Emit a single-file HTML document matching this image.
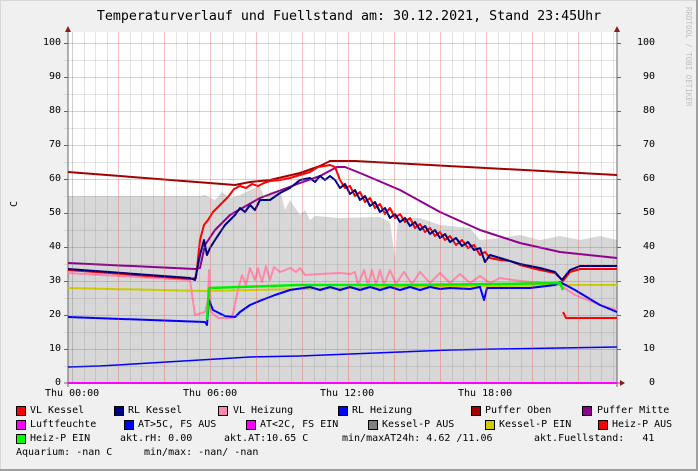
<!DOCTYPE html><html><head><style>
body{margin:0;background:#f0f0f0}
#w{position:relative;width:698px;height:471px;overflow:hidden;background:#f0f0f0;font-family:"DejaVu Sans Mono","Liberation Mono",monospace;}
.t{position:absolute;font-size:10px;color:#000;white-space:pre;line-height:12px}
.b{position:absolute;width:8px;height:8px;border:1px solid #000}
</style></head><body><div id="w">
<svg width="698" height="471" style="position:absolute;left:0;top:0">
<rect x="0" y="0" width="698" height="471" fill="#f0f0f0"/>
<rect x="0.5" y="0.5" width="696" height="469" fill="none" stroke="#d8d8d8"/>
<line x1="697" y1="0" x2="697" y2="471" stroke="#a0a0a0" stroke-width="2"/>
<line x1="0" y1="470" x2="698" y2="470" stroke="#a0a0a0" stroke-width="2"/>
<rect x="68" y="32" width="549" height="351" fill="#fff"/>
<polygon fill="#d7d7d7" points="68,383 68,196 200,196 205,195 215,200 222,192 230,198 240,195 250,190 260,186 265,200 270,192 280,190 285,210 290,200 300,215 305,210 310,220 315,216 340,218 380,217 390,222 395,258 398,218 420,218 440,225 470,228 480,240 500,238 520,235 540,240 560,236 580,240 600,236 617,240 617,383"/>
<line x1="72.5" y1="32" x2="72.5" y2="383" stroke="rgba(120,120,120,0.2)"/>
<line x1="68" y1="28" x2="68" y2="387" stroke="#666"/>
<line x1="617" y1="28" x2="617" y2="387" stroke="#666"/>
<line x1="64" y1="383" x2="622" y2="383" stroke="#666"/>
<polygon points="65,32 71,32 68,26" fill="#8b1a1a"/>
<polygon points="614,32 620,32 617,26" fill="#8b1a1a"/>
<polygon points="620,380 620,386 625,383" fill="#8b1a1a"/>
<g fill="none" stroke-width="2" stroke-linejoin="round">
<polyline stroke="#ff00ff" points="68,383 617,383"/>
<polyline stroke="#0000ff" stroke-width="1.5" points="68,367 100,366 150,363 200,360 250,357 300,356 350,354 400,352 450,350 500,349 560,348 617,347"/>
<polyline stroke="#a00000" points="68,172 235,185 250,182 270,180 300,173 320,166 330,161 355,161 617,175"/>
<polyline stroke="#900090" points="68,263 195,269 200,268 205,245 215,230 230,215 260,198 300,183 320,176 337,167 345,167 360,173 400,190 440,212 480,230 520,243 560,252 617,258"/>
<polyline style="stroke:#cccc00" points="68,288 205,291 300,289 400,287 500,286 560,285 617,285"/>
<polyline stroke="#ff88aa" points="68,273 190,280 195,315 205,312 208,300 209,270 211,312 218,318 232,318 238,290 242,275 246,285 250,268 255,280 258,268 262,282 266,266 270,280 274,267 280,272 290,268 296,272 300,268 305,275 320,274 340,273 350,274 355,272 358,285 364,270 368,285 372,270 376,285 380,270 384,285 390,270 396,284 404,272 412,284 420,272 430,283 440,273 450,283 460,274 470,283 480,276 490,283 500,278 520,281 545,283 560,285 575,295 600,305 617,310"/>
<polyline stroke="#0000ff" points="68,317 205,322 207,325 209,300 213,310 225,316 235,317 240,312 250,305 262,300 275,295 290,290 310,287 320,290 330,287 340,290 350,287 360,290 370,287 380,290 390,287 400,290 410,287 420,290 430,287 440,289 450,288 470,289 480,287 484,300 487,288 500,288 530,288 555,285 560,282 575,290 600,305 617,312"/>
<polyline stroke="#00ee00" stroke-width="2.5" points="207,320 209,288 300,285 400,285 500,284 560,283 563,290"/>
<polyline stroke="#ff0000" points="563,312 566,318 617,318"/>
<polyline stroke="#ff0000" points="68,270 190,279 196,278 200,240 204,225 208,220 213,212 220,205 228,197 234,189 240,186 246,188 252,184 258,186 264,183 270,181 280,180 290,178 300,175 310,172 318,167 325,166 330,165 335,167 340,180 345,188 350,186 355,196 360,192 365,202 370,198 375,208 380,204 385,214 390,208 395,218 400,214 405,222 410,218 415,228 420,224 425,232 430,228 435,236 440,232 445,240 450,236 456,245 462,240 468,248 474,245 480,255 485,252 490,258 500,260 510,261 520,265 540,270 555,273 563,281 570,272 580,269 617,269"/>
<polyline stroke="#000080" points="68,269 190,278 195,280 200,255 204,240 207,255 210,248 215,240 225,225 235,215 240,208 245,212 250,205 255,210 260,200 270,200 280,193 290,188 300,180 310,178 315,182 320,176 325,180 330,176 335,180 340,188 345,184 350,194 355,190 360,200 365,196 370,206 375,202 380,212 385,208 390,218 395,214 400,222 405,218 410,226 415,222 420,230 425,226 430,234 435,230 440,238 445,234 450,242 456,238 462,246 468,242 474,250 480,248 485,262 490,255 500,258 520,264 540,268 555,272 562,280 570,270 580,266 617,266"/>
</g>
</svg>
<svg width="698" height="471" style="position:absolute;left:0;top:0;pointer-events:none" id="gs"></svg>
<div class="t" style="left:0;top:9px;width:698px;text-align:center;font-size:13.3px;line-height:16px">Temperaturverlauf und Fuellstand am: 30.12.2021, Stand 23:45Uhr</div>
<div class="t" style="left:684px;top:7px;font-size:7.5px;color:#c0c0c0;writing-mode:vertical-rl;line-height:8px">RRDTOOL / TOBI OETIKER</div>
<div class="t" style="left:9px;top:201px;writing-mode:vertical-rl;transform:rotate(180deg)">C</div>
<div id="yl"></div>
<div class="t" style="left:45px;top:388px">Thu 00:00</div>
<div class="t" style="left:183px;top:388px">Thu 06:00</div>
<div class="t" style="left:320px;top:388px">Thu 12:00</div>
<div class="t" style="left:458px;top:388px">Thu 18:00</div>
<div class="b" style="left:16px;top:406px;background:#ff0000"></div><div class="t" style="left:30px;top:405px">VL Kessel</div>
<div class="b" style="left:114px;top:406px;background:#000080"></div><div class="t" style="left:128px;top:405px">RL Kessel</div>
<div class="b" style="left:218px;top:406px;background:#ff88aa"></div><div class="t" style="left:233px;top:405px">VL Heizung</div>
<div class="b" style="left:338px;top:406px;background:#0000ff"></div><div class="t" style="left:352px;top:405px">RL Heizung</div>
<div class="b" style="left:471px;top:406px;background:#a00000"></div><div class="t" style="left:485px;top:405px">Puffer Oben</div>
<div class="b" style="left:582px;top:406px;background:#900090"></div><div class="t" style="left:597px;top:405px">Puffer Mitte</div>
<div class="b" style="left:16px;top:420px;background:#ff00ff"></div><div class="t" style="left:30px;top:419px">Luftfeuchte</div>
<div class="b" style="left:124px;top:420px;background:#0000ff"></div><div class="t" style="left:138px;top:419px">AT&gt;5C, FS AUS</div>
<div class="b" style="left:246px;top:420px;background:#ff00ff"></div><div class="t" style="left:260px;top:419px">AT&lt;2C, FS EIN</div>
<div class="b" style="left:368px;top:420px;background:#808080"></div><div class="t" style="left:382px;top:419px">Kessel-P AUS</div>
<div class="b" style="left:485px;top:420px;background:#cccc00"></div><div class="t" style="left:499px;top:419px">Kessel-P EIN</div>
<div class="b" style="left:598px;top:420px;background:#ff0000"></div><div class="t" style="left:612px;top:419px">Heiz-P AUS</div>
<div class="b" style="left:16px;top:434px;background:#00ff00"></div><div class="t" style="left:30px;top:433px">Heiz-P EIN</div>
<div class="t" style="left:120px;top:433px">akt.rH: 0.00</div>
<div class="t" style="left:224px;top:433px">akt.AT:10.65 C</div>
<div class="t" style="left:342px;top:433px">min/maxAT24h: 4.62 /11.06</div>
<div class="t" style="left:534px;top:433px">akt.Fuellstand:   41</div>
<div class="t" style="left:16px;top:447px">Aquarium: -nan C</div>
<div class="t" style="left:144px;top:447px">min/max: -nan/ -nan</div>
</div>
<script>
var ns="http://www.w3.org/2000/svg",s=document.getElementById("gs");
function L(x1,y1,x2,y2,c){var l=document.createElementNS(ns,"line");l.setAttribute("x1",x1);l.setAttribute("y1",y1);l.setAttribute("x2",x2);l.setAttribute("y2",y2);l.setAttribute("stroke",c);l.setAttribute("stroke-width","1");s.appendChild(l);}
for(var k=0;k*11.5+72<617;k++){var x=Math.round(72+k*11.5)+0.5;L(x,32,x,383,(k%4==0&&k>0)?"rgba(230,80,80,0.35)":"rgba(120,120,120,0.2)");}
for(var v=5;v<=100;v+=5){var y=Math.round(383-3.4*v)+0.5;L(64,y,617,y,v%10==0?"rgba(230,80,80,0.35)":"rgba(120,120,120,0.2)");if(v%10==0){L(64,y,68,y,"#666");L(617,y,621,y,"#666");}}
var yl=document.getElementById("yl"),h="";
for(var v=0;v<=100;v+=10){var y=383-3.4*v-6;h+='<div class="t" style="left:20px;width:41px;text-align:right;top:'+y+'px">'+v+'</div><div class="t" style="left:614px;width:41px;text-align:right;top:'+y+'px">'+v+'</div>';}
yl.innerHTML=h;
</script>
</body></html>
